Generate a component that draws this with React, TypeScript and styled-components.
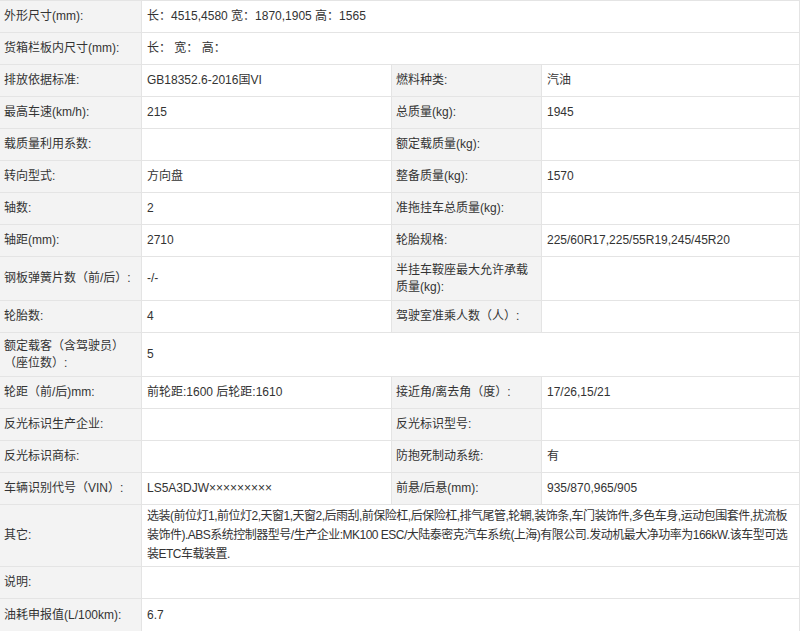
import React from 'react';
import styled, { createGlobalStyle } from 'styled-components';

const Global = createGlobalStyle`
  body { margin: 0; background: #fff; }
`;

const Grid = styled.div`
  display: grid;
  grid-template-columns: 142px 250px 150px 1fr;
  width: 800px;
  font-family: "Liberation Sans", "Noto Sans CJK SC", sans-serif;
  font-size: 12px;
  color: #333;
  border-top: 1px solid #e4e4e4;
`;

const Cell = styled.div<{ $label?: boolean; $span?: number; $h: number; $tight?: boolean }>`
  display: flex;
  align-items: center;
  box-sizing: border-box;
  height: ${({ $h }) => $h}px;
  padding: ${({ $label }) => ($label ? '2px 8px 2px 4px' : '2px 8px 2px 5px')};
  background: ${({ $label }) => ($label ? '#f3f3f3' : '#fff')};
  border-bottom: 1px solid #e4e4e4;
  border-right: 1px solid #e4e4e4;
  line-height: ${({ $tight }) => ($tight ? '19px' : '17px')};
  letter-spacing: ${({ $tight }) => ($tight ? '-0.5px' : '0')};
  grid-column: span ${({ $span }) => $span || 1};
`;

type Row = { h: number; cells: string[] };

const rows: Row[] = [
  { h: 32, cells: ['外形尺寸(mm):', '长：4515,4580 宽：1870,1905 高：1565'] },
  { h: 32, cells: ['货箱栏板内尺寸(mm):', '长：  宽：  高：'] },
  { h: 32, cells: ['排放依据标准:', 'GB18352.6-2016国VI', '燃料种类:', '汽油'] },
  { h: 32, cells: ['最高车速(km/h):', '215', '总质量(kg):', '1945'] },
  { h: 32, cells: ['载质量利用系数:', '', '额定载质量(kg):', ''] },
  { h: 32, cells: ['转向型式:', '方向盘', '整备质量(kg):', '1570'] },
  { h: 32, cells: ['轴数:', '2', '准拖挂车总质量(kg):', ''] },
  { h: 32, cells: ['轴距(mm):', '2710', '轮胎规格:', '225/60R17,225/55R19,245/45R20'] },
  { h: 44, cells: ['钢板弹簧片数（前/后）:', '-/-', '半挂车鞍座最大允许承载质量(kg):', ''] },
  { h: 32, cells: ['轮胎数:', '4', '驾驶室准乘人数（人）:', ''] },
  { h: 44, cells: ['额定载客（含驾驶员）（座位数）:', '5'] },
  { h: 32, cells: ['轮距（前/后)mm:', '前轮距:1600 后轮距:1610', '接近角/离去角（度）:', '17/26,15/21'] },
  { h: 32, cells: ['反光标识生产企业:', '', '反光标识型号:', ''] },
  { h: 32, cells: ['反光标识商标:', '', '防抱死制动系统:', '有'] },
  { h: 32, cells: ['车辆识别代号（VIN）:', 'LS5A3DJW×××××××××', '前悬/后悬(mm):', '935/870,965/905'] },
  {
    h: 62,
    cells: [
      '其它:',
      '选装(前位灯1,前位灯2,天窗1,天窗2,后雨刮,前保险杠,后保险杠,排气尾管,轮辋,装饰条,车门装饰件,多色车身,运动包围套件,扰流板装饰件).ABS系统控制器型号/生产企业:MK100 ESC/大陆泰密克汽车系统(上海)有限公司.发动机最大净功率为166kW.该车型可选装ETC车载装置.',
    ],
  },
  { h: 32, cells: ['说明:', ''] },
  { h: 33, cells: ['油耗申报值(L/100km):', '6.7'] },
];

export default function App() {
  return (
    <>
      <Global />
      <Grid>
        {rows.map((r, i) =>
          r.cells.length === 2 ? (
            <React.Fragment key={i}>
              <Cell $label $h={r.h}>{r.cells[0]}</Cell>
              <Cell $h={r.h} $span={3} $tight={r.h > 50}>{r.cells[1]}</Cell>
            </React.Fragment>
          ) : (
            <React.Fragment key={i}>
              {r.cells.map((c, j) => (
                <Cell key={j} $label={j % 2 === 0} $h={r.h}>{c}</Cell>
              ))}
            </React.Fragment>
          )
        )}
      </Grid>
    </>
  );
}
